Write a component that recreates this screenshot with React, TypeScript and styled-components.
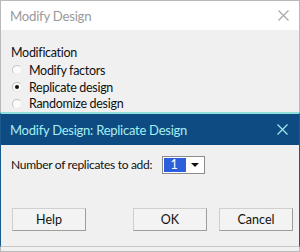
import styled, { createGlobalStyle } from 'styled-components';

const Global = createGlobalStyle`
  html, body {
    margin: 0;
    padding: 0;
    background: #d6d6d6;
  }
  body {
    font-family: Lato, 'Noto Sans', sans-serif;
  }
`;

const Stage = styled.div`
  position: relative;
  width: 300px;
  height: 252px;
  overflow: hidden;
  background: #cfcfcf;
`;

const BackWindow = styled.div`
  width: 298px;
  height: 250px;
  border: 1px solid #b9b9b9;
  background: #f0f0f0;
  display: flex;
  flex-direction: column;
`;

const BackTitle = styled.div`
  height: 29px;
  background: #ffffff;
  display: flex;
  align-items: center;
  justify-content: space-between;
  padding: 0 10px 0 9px;
  color: #9a9a9a;
  font-size: 13.2px;
  letter-spacing: -0.25px;
`;

const CloseGlyph = styled.svg<{ $color: string }>`
  width: 11px;
  height: 11px;
  stroke: ${(p) => p.$color};
  stroke-width: 1.2;
`;

const BackBody = styled.div`
  padding: 14px 0 0 10px;
  display: flex;
  flex-direction: column;
  font-size: 12.5px;
  letter-spacing: -0.3px;
  color: #111;
`;

const GroupLabel = styled.div`
  height: 18px;
  line-height: 18px;
`;

const RadioRow = styled.label`
  display: flex;
  align-items: center;
  gap: 7px;
  height: 16.7px;
  padding-left: 1px;
`;

const RadioDot = styled.span<{ $on?: boolean }>`
  width: 10px;
  height: 10px;
  border-radius: 50%;
  border: 1px solid #c4c4c4;
  border-right-color: #eeeeee;
  border-bottom-color: #e6e6e6;
  background: #fbfbfb;
  box-sizing: border-box;
  display: flex;
  align-items: center;
  justify-content: center;
  &::after {
    content: '';
    width: 4px;
    height: 4px;
    border-radius: 50%;
    background: ${(p) => (p.$on ? '#111' : 'transparent')};
  }
`;

const FrontWindow = styled.div`
  position: absolute;
  left: 0;
  top: 112px;
  width: 298px;
  height: 132px;
  border: 1px solid #1a5a8c;
  border-top: 2px solid #8fe0d8;
  border-bottom: 1px solid #c8c8c8;
  background: #f0f0f0;
  display: flex;
  flex-direction: column;
`;

const FrontTitle = styled.div`
  height: 31px;
  background: #0e4b82;
  display: flex;
  align-items: center;
  justify-content: space-between;
  padding: 0 11px 0 9px;
  color: #a6eef2;
  font-size: 13px;
  letter-spacing: -0.25px;
`;

const FrontBody = styled.div`
  flex: 1;
  display: flex;
  flex-direction: column;
  padding: 10px 6px 0 10px;
  font-size: 12px;
  color: #111;
`;

const FieldRow = styled.div`
  display: flex;
  align-items: center;
  gap: 10px;
  height: 19px;
`;

const FieldLabel = styled.span`
  letter-spacing: -0.3px;
`;

const Combo = styled.div`
  display: flex;
  width: 43px;
  height: 18px;
  box-sizing: border-box;
  border: 1px solid #8c8c8c;
  background: #fff;
  padding: 1px;
`;

const ComboValue = styled.div`
  flex: 1;
  background: #2d5fdc;
  color: #fff;
  font-size: 12.5px;
  line-height: 14px;
  text-align: center;
  padding-right: 2px;
`;

const ComboArrow = styled.div`
  width: 17px;
  display: flex;
  align-items: center;
  justify-content: center;
  &::after {
    content: '';
    border-left: 4px solid transparent;
    border-right: 4px solid transparent;
    border-top: 4px solid #111;
  }
`;

const ButtonBar = styled.div`
  display: flex;
  align-items: center;
  margin-top: 34px;
  padding-left: 1px;
`;

const Spacer = styled.div`
  flex: 1;
`;

const DlgButton = styled.button`
  width: 74px;
  height: 23px;
  box-sizing: border-box;
  border: 1px solid #cfcfcf;
  border-right-color: #9d9d9d;
  border-bottom-color: #9d9d9d;
  background: #f3f3f3;
  font-family: Lato, 'Noto Sans', sans-serif;
  font-size: 12.5px;
  color: #111;
  padding: 0;
  & + & {
    margin-left: 12px;
  }
`;

function Close({ color }: { color: string }) {
  return (
    <CloseGlyph $color={color} viewBox='0 0 11 11'>
      <path d='M0.5 0.5 L10.5 10.5 M10.5 0.5 L0.5 10.5' fill='none' />
    </CloseGlyph>
  );
}

export default function App() {
  return (
    <Stage>
      <Global />
      <BackWindow>
        <BackTitle>
          <span>Modify Design</span>
          <Close color='#a8a8a8' />
        </BackTitle>
        <BackBody>
          <GroupLabel>Modification</GroupLabel>
          <RadioRow>
            <RadioDot />
            Modify factors
          </RadioRow>
          <RadioRow>
            <RadioDot $on />
            Replicate design
          </RadioRow>
          <RadioRow>
            <RadioDot />
            Randomize design
          </RadioRow>
        </BackBody>
      </BackWindow>

      <FrontWindow>
        <FrontTitle>
          <span>Modify Design: Replicate Design</span>
          <Close color='#a6e6ee' />
        </FrontTitle>
        <FrontBody>
          <FieldRow>
            <FieldLabel>Number of replicates to add:</FieldLabel>
            <Combo>
              <ComboValue>1</ComboValue>
              <ComboArrow />
            </Combo>
          </FieldRow>
          <ButtonBar>
            <DlgButton>Help</DlgButton>
            <Spacer />
            <DlgButton>OK</DlgButton>
            <DlgButton>Cancel</DlgButton>
          </ButtonBar>
        </FrontBody>
      </FrontWindow>
    </Stage>
  );
}
